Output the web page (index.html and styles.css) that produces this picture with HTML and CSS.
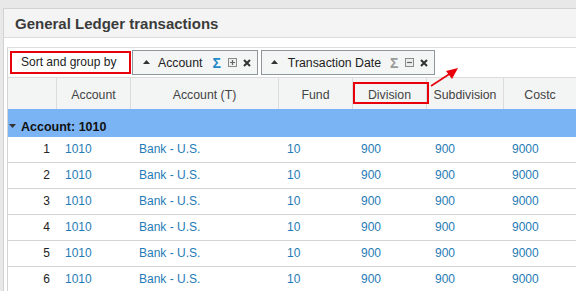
FILE: index.html
```html
<!DOCTYPE html>
<html>
<head>
<meta charset="utf-8">
<link rel="stylesheet" href="styles.css">
</head>
<body>
<div class="panel">
  <div class="panel-header">General Ledger transactions</div>
  <div class="panel-body">
    <div class="grid">
      <div class="groupbar">
        <div class="sortlabel">Sort and group by</div>
        <div class="chip">
          <svg class="up" width="7" height="4" viewBox="0 0 7 4"><path d="M0 4 L3.5 0 L7 4 Z" fill="#333"/></svg>
          <span class="chip-text">Account</span>
          <span class="sigma active">Σ</span>
          <svg class="box" width="9" height="9" viewBox="0 0 9 9"><rect x="0.5" y="0.5" width="8" height="8" fill="#eee" stroke="#8a8a8a"/><path d="M2 4.5 H7 M4.5 2 V7" stroke="#666" stroke-width="1.2"/></svg>
          <svg class="x" width="8" height="8" viewBox="0 0 8 8"><path d="M1 1 L7 7 M7 1 L1 7" stroke="#333" stroke-width="2"/></svg>
        </div>
        <div class="chip chip-date">
          <svg class="up" width="7" height="4" viewBox="0 0 7 4"><path d="M0 4 L3.5 0 L7 4 Z" fill="#333"/></svg>
          <span class="chip-text">Transaction Date</span>
          <span class="sigma">Σ</span>
          <svg class="box" width="9" height="9" viewBox="0 0 9 9"><rect x="0.5" y="0.5" width="8" height="8" fill="#eee" stroke="#8a8a8a"/><path d="M2 4.5 H7" stroke="#666" stroke-width="1.2"/></svg>
          <svg class="x" width="8" height="8" viewBox="0 0 8 8"><path d="M1 1 L7 7 M7 1 L1 7" stroke="#333" stroke-width="2"/></svg>
        </div>
      </div>
      <div class="row head">
        <div class="hc"></div>
        <div class="hc">Account</div>
        <div class="hc">Account (T)</div>
        <div class="hc">Fund</div>
        <div class="hc marked">Division</div>
        <div class="hc">Subdivision</div>
        <div class="hc">Costc</div>
      </div>
      <div class="grouprow">
        <svg class="down" width="7" height="4" viewBox="0 0 7 4"><path d="M0 0 L7 0 L3.5 4 Z" fill="#333"/></svg>
        <span>Account: 1010</span>
      </div>
      <div class="row data"><div class="num">1</div><div>1010</div><div>Bank - U.S.</div><div>10</div><div>900</div><div>900</div><div>9000</div></div>
      <div class="row data"><div class="num">2</div><div>1010</div><div>Bank - U.S.</div><div>10</div><div>900</div><div>900</div><div>9000</div></div>
      <div class="row data"><div class="num">3</div><div>1010</div><div>Bank - U.S.</div><div>10</div><div>900</div><div>900</div><div>9000</div></div>
      <div class="row data"><div class="num">4</div><div>1010</div><div>Bank - U.S.</div><div>10</div><div>900</div><div>900</div><div>9000</div></div>
      <div class="row data"><div class="num">5</div><div>1010</div><div>Bank - U.S.</div><div>10</div><div>900</div><div>900</div><div>9000</div></div>
      <div class="row data"><div class="num">6</div><div>1010</div><div>Bank - U.S.</div><div>10</div><div>900</div><div>900</div><div>9000</div></div>
    </div>
  </div>
</div>
<svg class="arrow" width="576" height="291" viewBox="0 0 576 291">
  <path d="M431 86 L451 73" stroke="#e8000b" stroke-width="1.6"/>
  <path d="M458 68 L446 71 L452 79 Z" fill="#e8000b"/>
</svg>
</body>
</html>
```

FILE: styles.css
```css
html, body {
  margin: 0;
  padding: 0;
  overflow: hidden;
  width: 576px;
  height: 291px;
}
body {
  background: #e8e8e8;
  font-family: "Liberation Sans", Arial, sans-serif;
  position: relative;
}
.panel {
  box-sizing: border-box;
  margin: 8px 0 0 3px;
  width: 573px;
  height: 283px;
  overflow: hidden;
  border: 1px solid #d2d2d2;
  border-right: none;
  border-bottom: none;
  background: #fff;
}
.panel-header {
  height: 28px;
  line-height: 29px;
  background: #f4f4f4;
  border-bottom: 1px solid #dcdcdc;
  padding-left: 11px;
  font-size: 15px;
  font-weight: bold;
  color: #3b3b3b;
}
.panel-body {
  padding: 9px 0 0 3px;
}
.grid {
  border-left: 1px solid #d4d4d4;
  border-top: 1px solid #dedede;
}
.groupbar {
  height: 29px;
  display: flex;
  align-items: center;
  padding-left: 2px;
  font-size: 12px;
  color: #222;
}
.sortlabel {
  box-sizing: border-box;
  width: 121px;
  height: 23px;
  border: 2px solid #e8000b;
  padding-left: 9px;
  line-height: 19px;
  background: #fff;
}
.chip {
  box-sizing: border-box;
  height: 25px;
  display: flex;
  align-items: center;
  border: 1px solid #8e989c;
  background: #f4f5f5;
  margin-left: 1px;
  padding: 0 6px 0 10px;
  font-size: 12.3px;
}
.chip-date {
  margin-left: 3px;
  padding-left: 9px;
}
.chip .up { margin-top: -1px; }
.chip-text { margin-left: 8px; }
.chip-date .chip-text { margin-left: 10px; }
.sigma {
  margin-left: 9px;
  font-size: 14px;
  font-weight: bold;
  color: #9a9a9a;
  line-height: 1;
}
.sigma.active { color: #1e88c8; margin-left: 10px; }
.box { margin-left: 7px; }
.x { margin-left: 6px; }
.row {
  display: grid;
  grid-template-columns: 49px 74px 148px 74px 74px 77px 72px;
}
.head {
  height: 31px;
  background: #f3f4f4;
  border-top: 1px solid #dcdcdc;
  font-size: 12.3px;
  color: #444;
}
.hc {
  box-sizing: border-box;
  border-right: 1px solid #dcdcdc;
  text-align: center;
  padding-top: 3px;
  line-height: 28px;
  position: relative;
}
.hc:last-child { border-right: none; }
.hc.marked::after {
  content: "";
  position: absolute;
  left: 0;
  top: 4px;
  width: 76px;
  height: 22px;
  box-sizing: border-box;
  border: 2px solid #e8000b;
}
.grouprow {
  box-sizing: border-box;
  height: 28px;
  padding-top: 8px;
  background: #7ab4f4;
  display: flex;
  align-items: center;
  font-size: 12.5px;
  font-weight: bold;
  color: #111;
}
.grouprow .down {
  margin-left: 1px;
  margin-right: 5px;
  margin-top: -2px;
}
.data {
  height: 25px;
  border-bottom: 1px solid #d4d4d4;
  font-size: 12px;
  line-height: 25px;
  color: #1f7bb6;
}
.data > div {
  padding-left: 8px;
}
.data > .num {
  padding-left: 0;
  padding-right: 7px;
  text-align: right;
  color: #222;
}
.arrow {
  position: absolute;
  left: 0;
  top: 0;
  pointer-events: none;
}
```
